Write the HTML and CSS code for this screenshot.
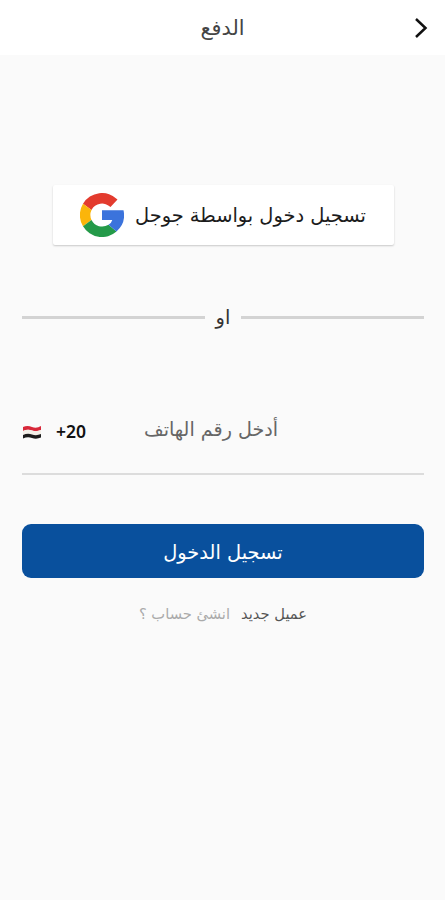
FILE: index.html
```html
<!DOCTYPE html>
<html lang="ar" dir="rtl">
<head>
    <meta charset="UTF-8">
    <meta name="viewport" content="width=device-width, initial-scale=1.0">
    <title>الدفع</title>
    <link rel="stylesheet" href="styles.css">
</head>
<body>
    <header class="topbar">
        <button class="back" aria-label="رجوع">
            <svg width="14" height="22" viewBox="0 0 14 22"><path d="M2 2l9.500 9-9.500 9" fill="none" stroke="#111" stroke-width="2.500"/></svg>
        </button>
        <h1>الدفع</h1>
    </header>

    <main class="login">
        <button class="google">
            <span>تسجيل دخول بواسطة جوجل</span>
            <svg class="g-logo" viewBox="0 0 44 44">
                <path fill="#E33B2E" d="M3 10.700A22 22 0 0 1 37.500 6.500L30.500 14A12 12 0 0 0 11.500 17z"/>
                <path fill="#FBB50A" d="M3 10.700A22 22 0 0 0 3 33.300L11.500 27A12 12 0 0 1 11.500 17z"/>
                <path fill="#249A49" d="M3 33.300A22 22 0 0 0 36.500 38.500L28.500 31.800A12 12 0 0 1 11.500 27z"/>
                <path fill="#3B73DC" d="M22 17.300H43.500A22 22 0 0 1 36.500 38.500L28.500 31.800Q31.500 30 32.300 27H22z"/>
            </svg>
        </button>

        <div class="divider"><span>او</span></div>

        <div class="phone">
            <span class="placeholder">أدخل رقم الهاتف</span>
            <span class="code" dir="ltr">+20</span>
            <svg class="flag" viewBox="0 0 20 14">
                <path d="M1 2q4.500-2 9 0t9-1v4q-4.500 2-9 .500t-9 .500z" fill="#d8283a"/>
                <path d="M1 6q4.500-2 9-.500t9-.500v4q-4.500 2-9 .500t-9 .500z" fill="#f4efe8"/>
                <path d="M1 10q4.500-2 9-.500t9-.500v3.500q-4.500 2-9 .500t-9 .500z" fill="#1c1c1c"/>
            </svg>
        </div>

        <button class="submit">تسجيل الدخول</button>

        <p class="signup"><span>عميل جديد</span><a>انشئ حساب ؟</a></p>
    </main>
</body>
</html>
```

FILE: styles.css
```css
* {
    box-sizing: border-box;
}
body {
    margin: 0;
    min-height: 900px;
    background-color: #fafafa;
    color: #333;
    font-family: "DejaVu Sans", sans-serif;
}
button {
    border: none;
    font-family: inherit;
}
.topbar {
    display: grid;
    grid-template-columns: 48px 1fr 48px;
    align-items: center;
    height: 55px;
    background-color: #fff;
}
.back {
    display: flex;
    justify-content: center;
    padding: 0;
    background: none;
}
h1 {
    margin: 0;
    padding-top: 1px;
    color: #444;
    font-size: 20.8px;
    font-weight: normal;
    text-align: center;
}
.login {
    display: flex;
    flex-direction: column;
    padding: 130px 21px 0 22px;
}
.google {
    display: flex;
    align-items: center;
    justify-content: center;
    gap: 11px;
    width: 341px;
    height: 60px;
    margin: 0 auto;
    padding: 0;
    background-color: #fff;
    border-radius: 2px;
    box-shadow: 0 1px 2px rgba(0, 0, 0, 0.2);
    color: #1c1c1c;
    font-size: 19.4px;
}
.g-logo {
    width: 44px;
    height: 44px;
}
.divider {
    display: flex;
    align-items: center;
    gap: 11px;
    height: 30px;
    margin-top: 57px;
    font-size: 19.5px;
}
.divider::before,
.divider::after {
    content: "";
    flex: 1;
    height: 3px;
    background-color: #d3d3d3;
}
.phone {
    display: flex;
    align-items: center;
    height: 88px;
    margin-top: 55px;
    border-bottom: 2px solid #dcdcdc;
}
.placeholder {
    margin-right: 146px;
    padding-bottom: 2px;
    color: #666;
    font-size: 19.1px;
}
.code {
    margin-right: auto;
    padding-top: 2px;
    color: #111;
    font-family: "Noto Sans", sans-serif;
    font-size: 17.5px;
    font-weight: 600;
}
.flag {
    width: 20px;
    height: 14px;
    margin-top: 3px;
    margin-right: 14px;
}
.submit {
    height: 54px;
    margin-top: 49px;
    padding: 2px 0 0;
    border-radius: 9px;
    background-color: #09509d;
    color: #fff;
    font-size: 19.4px;
}
.signup {
    display: flex;
    justify-content: center;
    gap: 11px;
    margin: 27px 0 0;
    color: #555;
    font-size: 14.7px;
}
.signup a {
    color: #aaa;
}
```
